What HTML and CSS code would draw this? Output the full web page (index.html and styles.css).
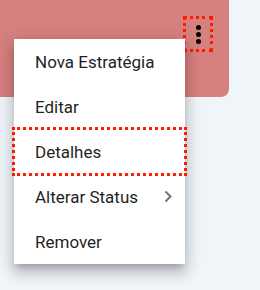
FILE: index.html
```html
<!DOCTYPE html>
<html>
    <head>
        <title>Menu</title>
        <link rel="stylesheet" href="styles.css">
    </head>
    <body>
        <div class="card">
            <button class="kebab">
                <span class="dot"></span>
                <span class="dot"></span>
                <span class="dot"></span>
            </button>
        </div>
        <ul class="menu">
            <li class="item">Nova Estratégia</li>
            <li class="item">Editar</li>
            <li class="item marked">Detalhes</li>
            <li class="item">Alterar Status
                <svg class="chev" width="8" height="13" viewBox="0 0 8 13"><path d="M1.5 1.5 L6.5 6.5 L1.5 11.5" fill="none" stroke="#757575" stroke-width="2"/></svg>
            </li>
            <li class="item">Remover</li>
        </ul>
    </body>
</html>
```
FILE: styles.css
```css
body{
    margin: 0;
    background-color: #f0f5fa;
    font-family: Roboto, "Noto Sans", sans-serif;
    height: 290px;
    position: relative;
}
.card{
    width: 229px;
    height: 97px;
    background-color: #d6807f;
    border-bottom-right-radius: 8px;
    display: flex;
    justify-content: flex-end;
    align-items: flex-start;
    box-sizing: border-box;
    padding: 16px 16px 0 0;
}
.kebab{
    width: 30px;
    height: 36px;
    padding: 0;
    margin: 0;
    background: none;
    border: 3px dotted #ff1a00;
    display: flex;
    flex-direction: column;
    align-items: center;
    justify-content: center;
    gap: 2px;
    box-sizing: border-box;
}
.dot{
    width: 5px;
    height: 5px;
    border-radius: 50%;
    background-color: #000;
}
.menu{
    position: absolute;
    left: 14px;
    top: 39px;
    width: 171px;
    margin: 0;
    padding: 0;
    list-style: none;
    background-color: #fff;
    box-shadow: 0 5px 6px -3px rgba(0,0,0,0.2), 0 9px 12px 1px rgba(0,0,0,0.14), 0 4px 16px 3px rgba(0,0,0,0.12);
}
.item{
    height: 45px;
    display: flex;
    align-items: center;
    padding: 0 13px 0 21px;
    font-size: 17px;
    color: #1f1f1f;
    justify-content: space-between;
}
.marked{
    outline: 3px dotted #ff1a00;
    outline-offset: -1px;
}
```
